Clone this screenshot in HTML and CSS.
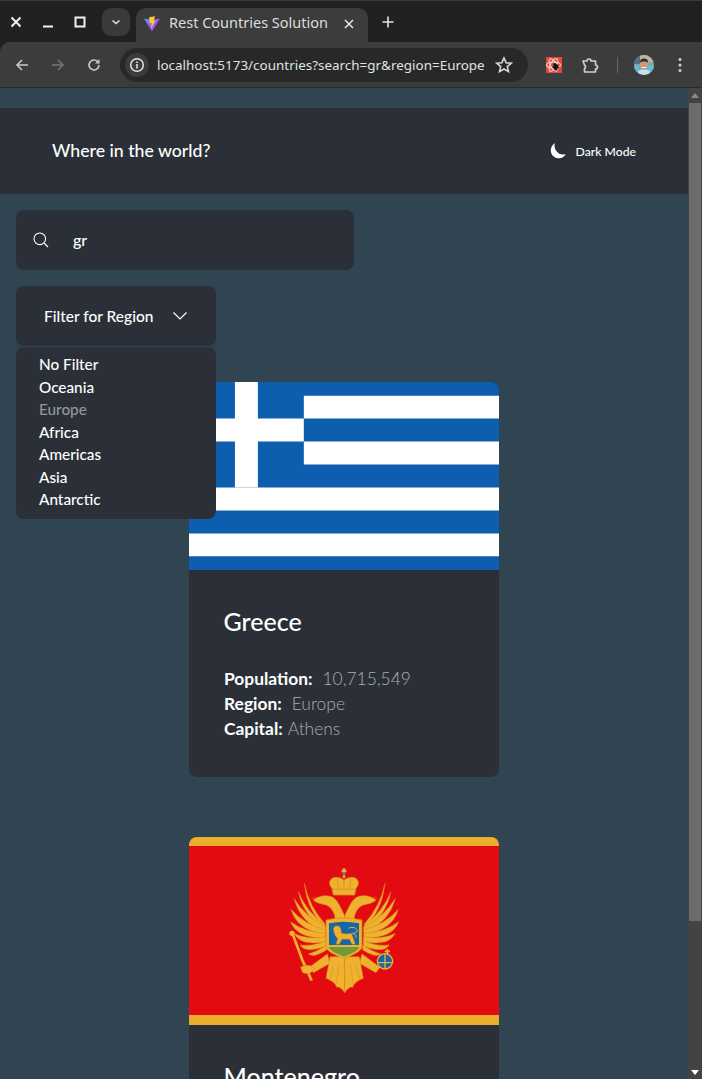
FILE: index.html
```html
<!DOCTYPE html>
<html lang="en">
<head>
<meta charset="utf-8">
<title>Rest Countries Solution</title>
<link rel="stylesheet" href="styles.css">
</head>
<body>
<div class="browser">
  <div class="tabstrip">
    <div class="winctl">
      <svg class="ic" viewBox="0 0 16 16"><path d="M3.5 3.5l9 9M12.500 3.500l-9 9" stroke="#f1f1f1" stroke-width="2" fill="none"/></svg>
      <svg class="ic" viewBox="0 0 16 16"><path d="M3 12.500h10" stroke="#f1f1f1" stroke-width="2" fill="none"/></svg>
      <svg class="ic" viewBox="0 0 16 16"><rect x="3.500" y="3.500" width="9" height="9" stroke="#f1f1f1" stroke-width="2" fill="none"/></svg>
    </div>
    <div class="tabsearch"><svg viewBox="0 0 10 10" width="10" height="10"><path d="M1.500 3.500L5 6.500l3.500-3" stroke="#e3e3e3" stroke-width="1.500" fill="none"/></svg></div>
    <div class="tab">
      <svg class="favicon" viewBox="0 0 16 16">
        <defs><linearGradient id="vite" x1="0" y1="0" x2="1" y2="1"><stop offset="0" stop-color="#45a5f5"/><stop offset=".5" stop-color="#9a5cf5"/><stop offset="1" stop-color="#b93cf0"/></linearGradient></defs>
        <path d="M0 2.500L8 4l8-1.500L8 15.500z" fill="url(#vite)"/>
        <path d="M5 1.200L11 .3 9.800 5l1.700-.5L7 13l.8-6-2 .5z" fill="#fdc72e"/>
      </svg>
      <span class="tabtitle">Rest Countries Solution</span>
      <svg class="tabclose" viewBox="0 0 10 10"><path d="M1 1l8 8M9 1l-8 8" stroke="#e6e6e6" stroke-width="1.500" fill="none"/></svg>
    </div>
    <svg class="newtab" viewBox="0 0 12 12"><path d="M6 .5v11M.5 6h11" stroke="#e3e3e3" stroke-width="1.600" fill="none"/></svg>
  </div>
  <div class="toolbar">
    <div class="nav">
      <svg class="ic" viewBox="0 0 16 16"><path d="M14 8H3M8 3L3 8l5 5" stroke="#c7c7c7" stroke-width="1.600" fill="none"/></svg>
      <svg class="ic" viewBox="0 0 16 16"><path d="M2 8h11M8 3l5 5-5 5" stroke="#757575" stroke-width="1.600" fill="none"/></svg>
      <svg class="ic" viewBox="0 0 16 16"><path d="M13 8a5 5 0 1 1-1.500-3.600L13 6" stroke="#c7c7c7" stroke-width="1.600" fill="none"/><path d="M13.500 2v4.500H9z" fill="#c7c7c7"/></svg>
    </div>
    <div class="omnibox">
      <div class="siteinfo"><svg viewBox="0 0 16 16" width="16" height="16"><circle cx="8" cy="8" r="6.300" stroke="#e3e3e3" stroke-width="1.500" fill="none"/><path d="M8 7v4.500M8 4.400v1.500" stroke="#e3e3e3" stroke-width="1.600"/></svg></div>
      <span class="url">localhost:5173/countries?search=gr&amp;region=Europe</span>
      <svg class="star" viewBox="0 0 18 18"><path d="M9 2l2.100 4.700 5.100.5-3.900 3.400 1.200 5L9 13l-4.500 2.600 1.200-5L1.800 7.200l5.100-.5z" stroke="#d8d8d8" stroke-width="1.600" fill="none"/></svg>
    </div>
    <div class="extensions">
      <svg class="reactext" viewBox="0 0 16 16">
        <rect width="16" height="16" fill="#e2483c"/>
        <g fill="none" stroke="#f6dcd8" stroke-width="1.100">
          <ellipse cx="7.500" cy="8" rx="7" ry="3"/>
          <ellipse cx="7.500" cy="8" rx="7" ry="3" transform="rotate(60 7.500 8)"/>
          <ellipse cx="7.500" cy="8" rx="7" ry="3" transform="rotate(120 7.500 8)"/>
        </g>
        <path d="M7 7l2-1 3 2 1 3-2 .5 .5 2-3-.5-1-2-1.500-.5 1.500-1.500z" fill="#1d1512"/>
      </svg>
      <svg class="puzzle" viewBox="0 0 18 18"><path d="M2 5h4a2 2 0 0 1 4 0h4.500v4a2 2 0 0 1 0 4v3H3.500v-3.500a2 2 0 0 0 0-3.500L2 5z" stroke="#cfcfcf" stroke-width="1.700" fill="none" stroke-linejoin="round"/></svg>
      <span class="sep"></span>
      <svg class="avatar" viewBox="0 0 20 20">
        <clipPath id="av"><circle cx="10" cy="10" r="10"/></clipPath>
        <g clip-path="url(#av)">
          <rect width="20" height="20" fill="#8aa5a8"/>
          <rect width="20" height="7" fill="#b8b8a2"/>
          <rect width="6" height="9" fill="#56707a"/>
          <rect y="11" x="13" width="7" height="6" fill="#5cc0d8"/>
          <rect y="11" width="5" height="6" fill="#5cc0d8"/>
          <path d="M3 20c0-4 3-5.500 7-5.500s7 1.500 7 5.500z" fill="#bfe6ee"/>
          <ellipse cx="10" cy="9.500" rx="4" ry="5" fill="#cf9a7c"/>
          <path d="M6 7.500C6 4 8 3.500 10 3.500s4 .5 4 4c-2-1.500-6-1.500-8 0z" fill="#33302c"/>
          <path d="M7.500 12.500h5" stroke="#f4eee6" stroke-width="1"/>
        </g>
      </svg>
      <svg class="kebab" viewBox="0 0 4 16"><circle cx="2" cy="2.500" r="1.500" fill="#d0d0d0"/><circle cx="2" cy="8" r="1.500" fill="#d0d0d0"/><circle cx="2" cy="13.500" r="1.500" fill="#d0d0d0"/></svg>
    </div>
  </div>
  <div class="viewport">
    <div class="page">
      <header class="site-header">
        <h1 class="brand">Where in the world?</h1>
        <div class="theme">
          <svg class="moon" viewBox="0 0 16 16"><path d="M5 .3A8 8 0 1 0 15.900 11 8.500 8.500 0 0 1 5 .3z" fill="#fff"/></svg>
          <span>Dark Mode</span>
        </div>
      </header>
      <main class="content">
        <div class="search">
          <svg class="search-ic" viewBox="0 0 16 16"><circle cx="6.800" cy="6.800" r="5.800" stroke="#fff" stroke-width="1.100" fill="none"/><path d="M11 11l4 4" stroke="#fff" stroke-width="1.100"/></svg>
          <span class="search-val">gr</span>
        </div>
        <div class="filter">
          <div class="filter-btn">
            <span>Filter for Region</span>
            <svg class="chev" viewBox="0 0 16 10"><path d="M1.500 1.500L8 8l6.500-6.500" stroke="#fff" stroke-width="1.200" fill="none"/></svg>
          </div>
          <ul class="menu">
            <li>No Filter</li>
            <li>Oceania</li>
            <li class="current">Europe</li>
            <li>Africa</li>
            <li>Americas</li>
            <li>Asia</li>
            <li>Antarctic</li>
          </ul>
        </div>
        <div class="cards">
          <article class="card">
            <svg class="flag" viewBox="0 0 27 18" preserveAspectRatio="xMidYMid slice">
              <rect width="27" height="18" fill="#0d5eaf"/>
              <path d="M10 2h17v2H10zM10 6h17v2H10zM0 10h27v2H0zM0 14h27v2H0z" fill="#fff"/>
              <path d="M4 0h2v10H4zM0 4h10v2H0z" fill="#fff"/>
            </svg>
            <div class="card-body">
              <h2 class="country">Greece</h2>
              <p class="fact"><b>Population:</b><span class="v1">10,715,549</span></p>
              <p class="fact"><b>Region:</b><span class="v1">Europe</span></p>
              <p class="fact"><b>Capital:</b><span class="v2">Athens</span></p>
            </div>
          </article>
          <article class="card">
            <svg class="flag" viewBox="0 0 310 188">
              <rect width="310" height="188" fill="#e30a12"/>
              <rect width="310" height="9" fill="#e8b02a"/>
              <rect y="178" width="310" height="10" fill="#e8b02a"/>
              <g transform="translate(81 13) scale(.33333)" stroke-linejoin="round">
                <g id="half" fill="#eeb22f" stroke="#d98a1e" stroke-width="1.500">
                  <!-- wing feathers fanning out from the shoulder -->
                  <path d="M165 232Q112 185 103 100Q118 170 165 222Z"/>
                  <path d="M165 238Q100 200 85 125Q110 185 165 226Z"/>
                  <path d="M165 246Q90 218 72 145Q105 200 168 232Z"/>
                  <path d="M165 254Q80 240 63 178Q100 222 168 240Z"/>
                  <path d="M165 264Q80 265 62 215Q100 245 168 250Z"/>
                  <path d="M168 275Q90 290 72 250Q110 270 168 260Z"/>
                  <path d="M168 288Q105 312 90 285Q125 290 168 272Z"/>
                  <path d="M170 300Q130 325 115 312Q140 305 170 285Z"/>
                  <!-- leg -->
                  <path d="M172 312L118 352L130 368L180 340Z"/>
                  <!-- neck and head -->
                  <path d="M130 150C140 140 165 133 185 140C200 146 212 170 224 198V214H196C196 192 186 172 168 165C155 162 140 160 130 150Z"/>
                  <path d="M132 150C125 146 128 140 136 142" fill="none"/>
                  <!-- tail feathers -->
                  <path d="M224 320H180L168 385Q195 395 200 412Q210 408 224 428Z"/>
                  <path d="M190 345L178 392M206 345L198 408" fill="none"/>
                </g>
                <use href="#half" transform="translate(448 0) scale(-1 1)"/>
                <!-- crown -->
                <path d="M190 135L186 115C172 100 180 82 198 82C208 82 216 86 222 90C228 86 236 82 246 82C264 82 272 100 258 115L254 135Z" fill="#eeb22f" stroke="#d98a1e" stroke-width="2.500"/>
                <path d="M222 90V118M204 84C200 96 204 108 208 118M240 84C244 96 240 108 236 118M187 118H257" stroke="#d98a1e" stroke-width="2" fill="none"/>
                <path d="M222 55V84M215 63H229" stroke="#eeb22f" stroke-width="7"/>
                <rect x="218" y="67" width="8" height="9" fill="#3f7ea8"/>
                <!-- shield -->
                <path d="M168 210Q222 198 276 210V290C276 305 240 318 222 326C204 318 168 305 168 290Z" fill="#eeb22f" stroke="#d98a1e" stroke-width="2"/>
                <path d="M177 220Q222 210 267 220V285H177Z" fill="#1667a9"/>
                <path d="M177 291H267C267 302 236 314 222 320C208 314 177 302 177 291Z" fill="#6f9a38"/>
                <path d="M190 235C195 225 208 225 212 235L215 250C225 252 235 252 245 250L251 268L256 283H246L238 268H216L208 283H198L203 265C195 260 191 247 190 235Z" fill="#eeb22f" stroke="#a8701a" stroke-width="1.500"/>
                <path d="M235 235C245 230 255 232 260 238S257 250 248 250C256 253 262 258 256 264" stroke="#eeb22f" stroke-width="3" fill="none"/>
                <!-- scepter -->
                <path d="M67 250L97 330L125 392" stroke="#eeb22f" stroke-width="8" fill="none"/>
                <circle cx="66" cy="250" r="8" fill="#eeb22f"/>
                <path d="M92 352C105 342 125 345 135 355L118 372L98 368Z" fill="#eeb22f" stroke="#d98a1e" stroke-width="2"/>
                <!-- orb -->
                <circle cx="345" cy="334" r="23" fill="#1667a9" stroke="#eeb22f" stroke-width="4"/>
                <path d="M322 338H368M345 312V356" stroke="#eeb22f" stroke-width="4"/>
                <path d="M352 297V314M344 304H360" stroke="#eeb22f" stroke-width="5"/>
              </g>
            </svg>
            <div class="card-body">
              <h2 class="country">Montenegro</h2>
            </div>
          </article>
        </div>
      </main>
    </div>
    <div class="scrollbar">
      <div class="arrow-up"></div>
      <div class="thumb"></div>
      <div class="arrow-down"></div>
    </div>
  </div>
</div>
</body>
</html>
```
FILE: styles.css
```css
* { box-sizing: border-box; }
html, body { margin: 0; height: 100%; overflow: hidden; background: #202121; }
body { font-family: "Lato", "Noto Sans", sans-serif; }

.browser { height: 1079px; display: flex; flex-direction: column; }

.tabstrip { height: 42px; flex: none; display: flex; align-items: flex-end; background: #202121; border-top: 1px solid #3a3a3a; }
.ic { width: 16px; height: 16px; flex: none; }
.winctl { display: flex; gap: 16px; padding: 0 0 12px 8px; width: 102px; }
.tabsearch { width: 28px; height: 28px; margin: 0 6px 6px 0; background: #3a3a3a; border-radius: 9px; display: flex; align-items: center; justify-content: center; }
.tab { width: 232px; height: 34px; background: #3c3c3c; border-radius: 10px 10px 0 0; display: flex; align-items: center; padding: 0 10px 6px 8px; }
.favicon { width: 16px; height: 16px; flex: none; margin-top: 3px; }
.tabtitle { font: 14.500px "Noto Sans", sans-serif; color: #dcdcdc; margin-left: 9px; flex: 1; white-space: nowrap; }
.tabclose { width: 10px; height: 10px; margin-right: 4px; margin-top: 3px; }
.newtab { width: 12px; height: 12px; margin: 0 0 14px 14px; }

.toolbar { height: 46px; flex: none; background: #3c3c3c; border-top-left-radius: 10px; border-bottom: 1px solid #2a2a2a; display: flex; align-items: center; padding: 0 0 0 14px; }
.nav { display: flex; gap: 20px; width: 106px; }
.omnibox { width: 408px; height: 34px; flex: none; border-radius: 17px; background: #282828; display: flex; align-items: center; padding: 0 15px 0 5px; }
.siteinfo { width: 24px; height: 24px; border-radius: 50%; background: #3c3c3c; display: flex; align-items: center; justify-content: center; flex: none; }
.url { font: 13.450px "Noto Sans", sans-serif; color: #dfe3e6; margin-left: 8px; flex: 1; white-space: nowrap; }
.star { width: 18px; height: 18px; flex: none; }
.extensions { display: flex; align-items: center; margin-left: 18px; }
.reactext { width: 16px; height: 16px; }
.puzzle { width: 18px; height: 18px; margin-left: 19px; }
.sep { width: 1px; height: 16px; background: #666; margin-left: 18px; }
.avatar { width: 20px; height: 20px; margin-left: 16px; }
.kebab { width: 4px; height: 16px; margin-left: 24px; }

.viewport { flex: 1; min-height: 0; display: flex; background: #304452; }
.page { flex: 1; min-width: 0; overflow: hidden; padding-top: 20px; }
.site-header { height: 86px; background: #2b3038; display: flex; align-items: center; justify-content: space-between; padding: 0 52px 0 52px; color: #fff; }
.brand { margin: 0 0 2px; font-size: 17.700px; font-weight: 500; }
.theme { display: flex; align-items: center; gap: 10px; font-size: 12.200px; font-weight: 500; }
.moon { width: 16px; height: 16px; }

.content { padding: 16px 0 0 16px; position: relative; }
.search { width: 338px; height: 60px; background: #2b3038; border-radius: 8px; display: flex; align-items: center; padding: 0 0 1px 17px; color: #fff; }
.search-ic { width: 16px; height: 16px; flex: none; }
.search-val { margin-left: 24px; font-size: 16px; font-weight: 500; }
.filter { position: relative; width: 200px; margin-top: 16px; }
.filter-btn { height: 60px; background: #2b3038; border-radius: 8px; color: #fff; font-size: 15.500px; font-weight: 500; display: flex; align-items: center; padding: 0 28px 1px; justify-content: space-between; }
.chev { width: 16px; height: 10px; }
.menu { position: absolute; z-index: 2; top: 61px; left: 0; width: 200px; margin: 0; padding: 6px 0 8px 23px; list-style: none; background: #2b3038; border-radius: 8px; color: #fff; font-size: 15.300px; font-weight: 500; }
.menu li { height: 22.500px; line-height: 22.500px; }
.menu .current { color: #94979b; }

.cards { display: flex; flex-direction: column; align-items: center; gap: 60px; margin: 36px 0 0 -16px; }
.card { width: 310px; background: #2b3038; border-radius: 8px; overflow: hidden; flex: none; }
.flag { display: block; width: 310px; height: 188px; }
.card-body { padding: 34px 35px 36px; color: #fff; }
.country { margin: 0 0 28px -.5px; font-size: 25px; font-weight: 500; line-height: 34px; }
.fact { margin: 0; font-size: 17.400px; line-height: 25px; font-weight: 300; white-space: nowrap; color: #a8adb0; }
.fact b { color: #fff; font-weight: 700; }
.v1 { margin-left: 10px; }
.v2 { margin-left: 5px; }

.scrollbar { width: 14px; flex: none; background: #434343; display: flex; flex-direction: column; align-items: center; padding: 0; }
.arrow-up { width: 0; height: 0; margin: 5px 0 5px; border: 4px solid transparent; border-top: 0; border-bottom: 5px solid #8a8a8a; }
.thumb { width: 12px; height: 818px; background: #6c6c6c; }
.arrow-down { margin-top: auto; margin-bottom: 4px; width: 0; height: 0; border: 4px solid transparent; border-bottom: 0; border-top: 5px solid #fff; }
```
